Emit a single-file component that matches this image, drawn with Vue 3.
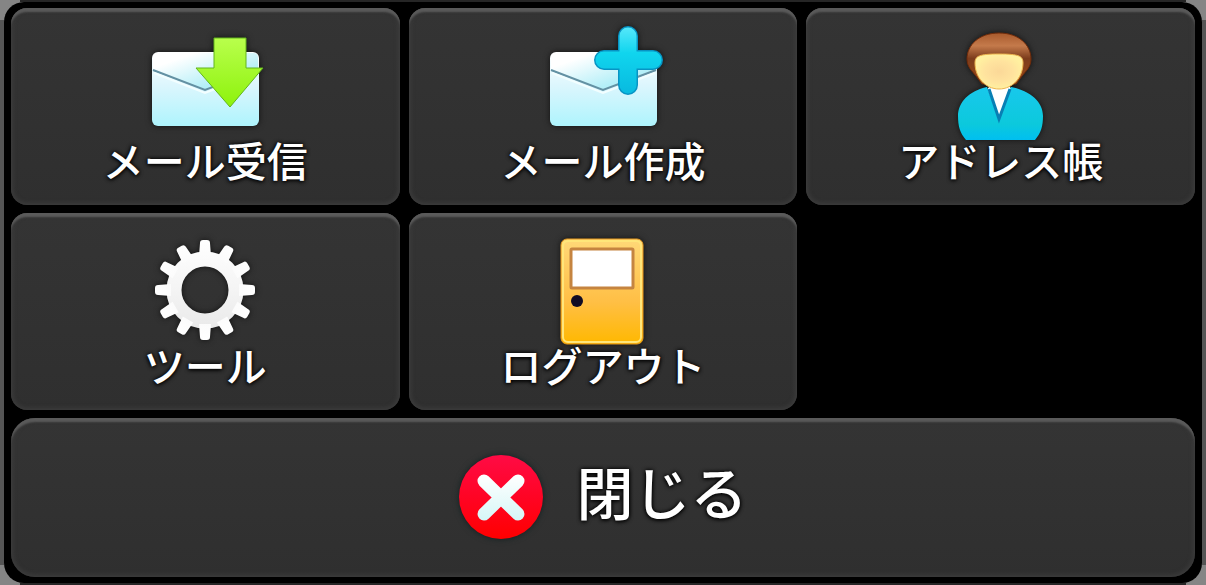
<script setup>
const items = [
  { id: 'receive', label: 'メール受信' },
  { id: 'compose', label: 'メール作成' },
  { id: 'contacts', label: 'アドレス帳' },
  { id: 'tools', label: 'ツール' },
  { id: 'logout', label: 'ログアウト' },
]
const teeth = Array.from({ length: 12 }, (_, i) => i * 30)
</script>

<template>
  <main class="frame">
    <nav class="panel">
      <button v-for="item in items" :key="item.id" type="button" class="tile">
        <svg class="icon" viewBox="0 0 120 116" aria-hidden="true">
          <defs>
            <linearGradient :id="item.id + '-paper'" x1="0" y1="0" x2="0" y2="1">
              <stop offset="0" stop-color="#ffffff" />
              <stop offset=".45" stop-color="#dcf6fd" />
              <stop offset="1" stop-color="#aef4fd" />
            </linearGradient>
            <linearGradient :id="item.id + '-flap'" x1="0" y1="0" x2="1" y2="1">
              <stop offset=".2" stop-color="#ffffff" />
              <stop offset=".7" stop-color="#b4eff8" />
            </linearGradient>
            <linearGradient :id="item.id + '-green'" x1="0" y1="0" x2="0" y2="1">
              <stop offset="0" stop-color="#b9ff4c" />
              <stop offset="1" stop-color="#8df20c" />
            </linearGradient>
            <linearGradient :id="item.id + '-plus'" gradientUnits="userSpaceOnUse" x1="0" y1="0" x2="0" y2="70">
              <stop offset="0" stop-color="#5ce9fb" />
              <stop offset=".4" stop-color="#10d5ee" />
              <stop offset="1" stop-color="#08b9df" />
            </linearGradient>
            <linearGradient :id="item.id + '-hair'" x1="0" y1="0" x2="0" y2="1">
              <stop offset="0" stop-color="#a85a2c" />
              <stop offset=".25" stop-color="#c47a4b" />
              <stop offset=".5" stop-color="#7c3c1c" />
              <stop offset="1" stop-color="#9b4a16" />
            </linearGradient>
            <radialGradient :id="item.id + '-face'">
              <stop offset="0" stop-color="#fbd898" />
              <stop offset=".6" stop-color="#ffe39e" />
              <stop offset="1" stop-color="#fff0a0" />
            </radialGradient>
            <linearGradient :id="item.id + '-body'" x1="0" y1="0" x2="0" y2="1">
              <stop offset="0" stop-color="#18c8ec" />
              <stop offset=".7" stop-color="#0cc9dc" />
              <stop offset="1" stop-color="#00bff0" />
            </linearGradient>
            <linearGradient :id="item.id + '-gear'" gradientUnits="userSpaceOnUse" x1="0" y1="10" x2="0" y2="110">
              <stop offset="0" stop-color="#ffffff" />
              <stop offset=".5" stop-color="#f4f4f4" />
              <stop offset="1" stop-color="#e6e6e6" />
            </linearGradient>
            <linearGradient :id="item.id + '-door'" x1="0" y1="0" x2="0" y2="1">
              <stop offset="0" stop-color="#ffd878" />
              <stop offset=".6" stop-color="#ffbf45" />
              <stop offset="1" stop-color="#ffb800" />
            </linearGradient>
          </defs>

          <g v-if="item.id === 'receive' || item.id === 'compose'">
            <rect x="7" y="27" width="107" height="74" rx="6" :fill="`url(#${item.id}-paper)`" />
            <path d="M8 44V33q0-5 5-5h95q5 0 5 5v11L60 65Z" :fill="`url(#${item.id}-flap)`" />
            <path d="M8 45 60 65 113 45" fill="none" stroke="#6391a3" stroke-width="2" />
            <path d="M9 48 60 68 112 48" fill="none" stroke="#f2feff" stroke-width="2" />
          </g>
          <path
            v-if="item.id === 'receive'"
            d="M69 13h32v30h17L85 82 51 43h18Z"
            :fill="`url(#${item.id}-green)`" stroke="#62b51c" stroke-width="1"
          />
          <g v-if="item.id === 'compose'" fill="none" stroke-linecap="round">
            <path d="M85 11v49M61 35h49" stroke="#0794c4" stroke-width="20" />
            <path d="M85 11v49M61 35h49" :stroke="`url(#${item.id}-plus)`" stroke-width="17" />
          </g>

          <g v-if="item.id === 'contacts'">
            <path d="M58 8C38 8 26 20 26 34c0 8 5 12 9 17l6 8h34l6-8c4-5 9-9 9-17C90 20 78 8 58 8Z" :fill="`url(#${item.id}-hair)`" stroke="#712c0b" stroke-width="1" />
            <path d="M48 62h21l8 14-19 22-20-22Z" fill="#fff" />
            <path d="M46 62C28 66 17 77 17 91c0 10 2 17 8 24h69c6-7 8-14 8-24 0-14-12-25-32-29L58 94Z" :fill="`url(#${item.id}-body)`" />
            <path d="m48 64 10 30 11-30" fill="none" stroke="#087fb4" stroke-width="3" />
            <path d="M34 38c0-7 4-9 24-9s24 2 24 9c0 14-10 26-24 26S34 52 34 38Z" :fill="`url(#${item.id}-face)`" stroke="#eeb54e" stroke-width="1" />
          </g>

          <g v-if="item.id === 'tools'" fill="none" :stroke="`url(#${item.id}-gear)`">
            <circle cx="60" cy="60" r="31" stroke-width="15" />
            <path
              v-for="angle in teeth" :key="angle"
              d="M54 26 55 13q0-3 3-3h4q3 0 3 3l1 13Z" :transform="`rotate(${angle} 60 60)`"
              :fill="`url(#${item.id}-gear)`" stroke="none"
            />
          </g>

          <g v-if="item.id === 'logout'">
            <rect x="18" y="9" width="82" height="105" rx="6" :fill="`url(#${item.id}-door)`" stroke="#e79b20" stroke-width="1" />
            <rect x="20" y="11" width="78" height="101" rx="5" fill="none" stroke="#ffe67a" stroke-width="2" />
            <rect x="28" y="19" width="62" height="39" rx="1" fill="#fff" stroke="#c58440" stroke-width="3" />
            <circle cx="34" cy="71" r="6" fill="#100c24" />
          </g>
        </svg>
        <span class="label">{{ item.label }}</span>
      </button>

      <button type="button" class="tile close">
        <svg class="close-icon" viewBox="0 0 86 86" aria-hidden="true">
          <defs>
            <linearGradient id="close-red" x1="0" y1="0" x2="0" y2="1">
              <stop offset="0" stop-color="#ff0b45" />
              <stop offset=".5" stop-color="#ff0424" />
              <stop offset="1" stop-color="#ff0000" />
            </linearGradient>
            <linearGradient id="close-cross" gradientUnits="userSpaceOnUse" x1="0" y1="20" x2="0" y2="66">
              <stop offset="0" stop-color="#ffffff" />
              <stop offset="1" stop-color="#d5f6f6" />
            </linearGradient>
          </defs>
          <circle cx="43" cy="42" r="42" fill="url(#close-red)" />
          <path d="m26 26 34 33M60 26 26 59" fill="none" stroke="url(#close-cross)" stroke-width="13" stroke-linecap="round" />
        </svg>
        <span class="close-label">閉じる</span>
      </button>
    </nav>
  </main>
</template>

<style>
body {
  margin: 0;
  background: #555;
}
</style>

<style scoped>
.frame {
  box-sizing: border-box;
  display: flex;
  min-height: 100vh;
  padding: 2px 4px;
  background:
    linear-gradient(#262626, #262626) top / calc(100% - 40px) 2px no-repeat,
    linear-gradient(#262626, #262626) bottom / calc(100% - 40px) 2px no-repeat,
    linear-gradient(#555, #555) left / 4px calc(100% - 40px) no-repeat,
    linear-gradient(#555, #555) right / 4px calc(100% - 40px) no-repeat,
    #858585;
}

.panel {
  box-sizing: border-box;
  display: grid;
  flex: 1;
  grid-template-columns: repeat(3, 1fr);
  grid-template-rows: auto auto 1fr;
  gap: 8px 9px;
  padding: 6px 7px;
  border-radius: 20px;
  background: #000;
}

.tile {
  display: flex;
  flex-direction: column;
  align-items: center;
  margin: 0;
  padding: 17px 0 28px;
  border: 0;
  border-radius: 16px;
  background: linear-gradient(#343434, #2f2f2f);
  box-shadow:
    inset 0 5px 2px -1px #5a5a5a,
    inset 0 0 4px 2px #3c3c3c;
  color: #fff;
  font-family: "Noto Sans CJK JP", sans-serif;
  font-weight: 500;
  text-shadow: 0 0 4px #000, 0 1px 4px #000;
  cursor: pointer;
}

.icon {
  width: 120px;
  height: 116px;
  overflow: visible;
  filter: drop-shadow(0 0 3px #111);
}

.label {
  position: relative;
  font-size: 41px;
  line-height: 36px;
}

.close {
  grid-column: 1 / -1;
  flex-direction: row;
  justify-content: center;
  gap: 32px;
  padding: 0;
  border-radius: 24px;
}

.close-icon {
  width: 86px;
  height: 86px;
  filter: drop-shadow(0 0 3px #102020);
}

.close-label {
  padding-bottom: 16px;
  font-size: 57px;
  line-height: 56px;
}
</style>
